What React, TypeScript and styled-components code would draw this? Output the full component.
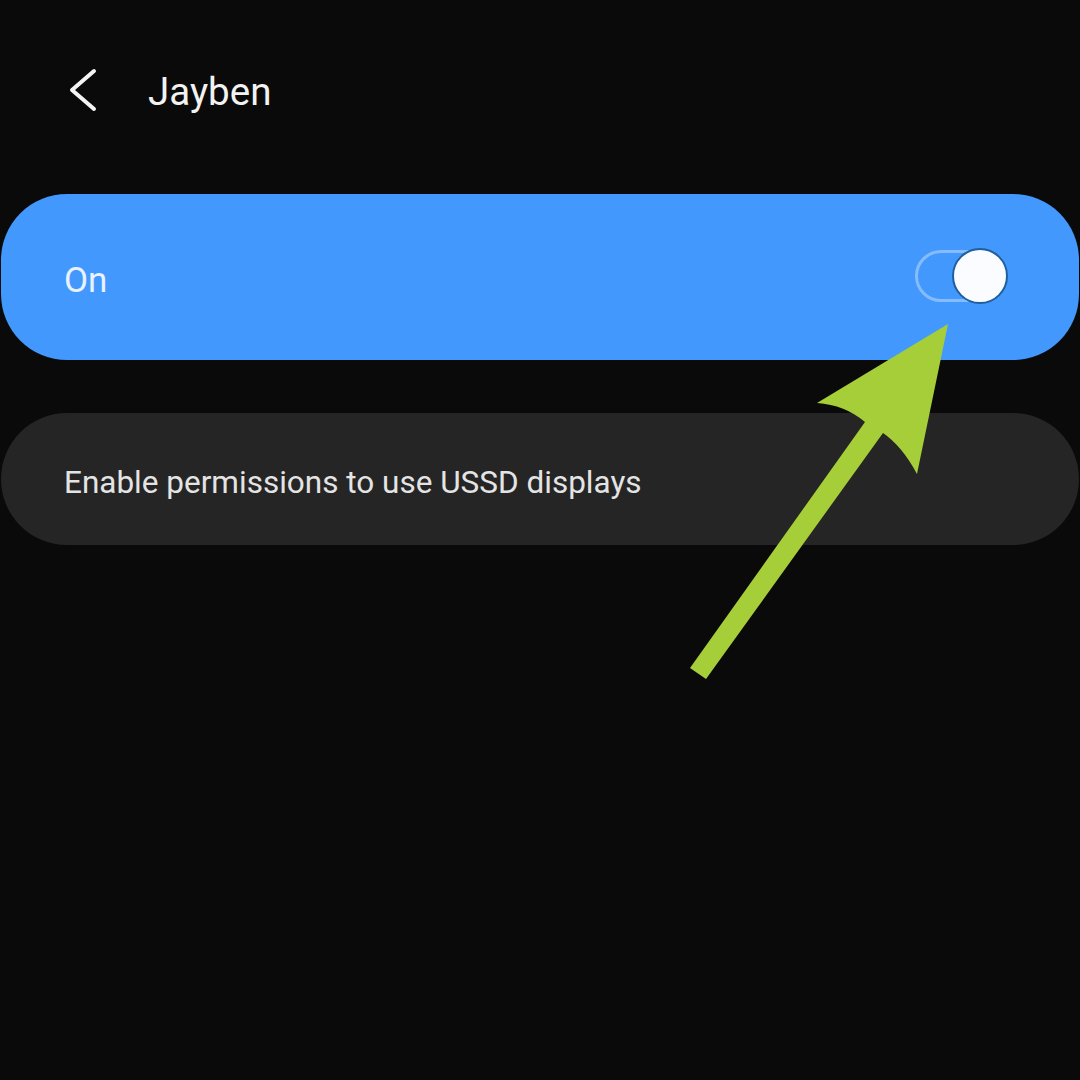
import React from "react";
import styled, { createGlobalStyle } from "styled-components";

const Global = createGlobalStyle`
  html, body { margin: 0; padding: 0; background: #0a0a0a; }
  body { font-family: Roboto, "Noto Sans", sans-serif; }
`;

const Page = styled.div`
  position: relative;
  width: 1080px;
  height: 1080px;
  background: #0a0a0a;
  overflow: hidden;
  display: flex;
  flex-direction: column;
`;

const Header = styled.header`
  height: 180px;
  display: flex;
  align-items: flex-start;
  padding: 68px 0 0 68px;
  box-sizing: border-box;
  gap: 50px;
`;

const BackButton = styled.button`
  width: 30px;
  height: 44px;
  padding: 0;
  border: none;
  background: none;
  display: flex;
  align-items: center;
  justify-content: center;
`;

const Title = styled.h1`
  margin: 0;
  padding-top: 2px;
  font-family: Roboto, sans-serif;
  font-weight: 400;
  font-size: 38.5px;
  line-height: 44px;
  color: #f2f2f2;
`;

const Cards = styled.div`
  display: flex;
  flex-direction: column;
  gap: 53px;
  padding: 14px 1px 0 1px;
`;

const Card = styled.div<{ $tone: "blue" | "gray"; $h: number }>`
  height: ${(p) => p.$h}px;
  border-radius: 66px;
  background: ${(p) => (p.$tone === "blue" ? "#4398fd" : "#252525")};
  display: flex;
  align-items: center;
  justify-content: space-between;
  padding: 0 72px 0 63px;
  box-sizing: border-box;
`;

const Label = styled.span<{ $size: number; $muted?: boolean }>`
  font-family: Roboto, sans-serif;
  font-size: ${(p) => p.$size}px;
  color: ${(p) => (p.$muted ? "#e4e4e4" : "#eaf2ff")};
  padding-top: 7px;
`;

const Track = styled.div`
  position: relative;
  width: 92px;
  height: 52px;
  border-radius: 26px;
  border: 3px solid rgba(255, 255, 255, 0.35);
  box-sizing: border-box;
  margin-top: -3px;
`;

const Thumb = styled.div`
  position: absolute;
  right: -4px;
  top: -5px;
  width: 56px;
  height: 56px;
  border-radius: 50%;
  background: #fbfcff;
  border: 2.5px solid #1f5f9f;
  box-sizing: border-box;
`;

const ArrowLayer = styled.svg`
  position: absolute;
  left: 0;
  top: 0;
  width: 1080px;
  height: 1080px;
  pointer-events: none;
`;

export default function App() {
  return (
    <>
      <Global />
      <Page>
        <Header>
          <BackButton aria-label="Back">
            <svg width="30" height="44" viewBox="0 0 30 44">
              <path d="M26 3 L4 22 L26 41" fill="none" stroke="#f4f4f4" strokeWidth="4" strokeLinecap="round" strokeLinejoin="round" />
            </svg>
          </BackButton>
          <Title>Jayben</Title>
        </Header>
        <Cards>
          <Card $tone="blue" $h={166}>
            <Label $size={35}>On</Label>
            <Track>
              <Thumb />
            </Track>
          </Card>
          <Card $tone="gray" $h={132}>
            <Label $size={31.5} $muted>Enable permissions to use USSD displays</Label>
          </Card>
        </Cards>
        <ArrowLayer viewBox="0 0 1080 1080">
          <path
            d="M948 324 L917 474 Q902 446 883 433 L706 679 L690 668 L865 422 Q845 405 817 403 Z"
            fill="#a6ce39"
          />
        </ArrowLayer>
      </Page>
    </>
  );
}
